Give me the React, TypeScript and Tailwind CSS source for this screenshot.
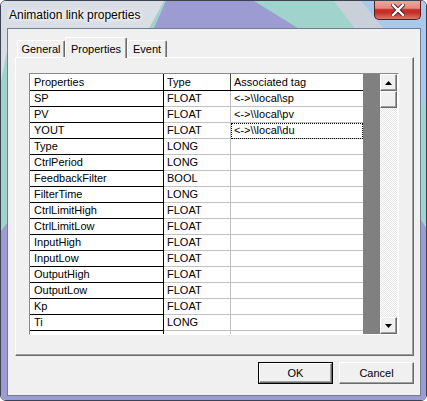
import React from "react";

type Row = [string, string, string];

const rows: Row[] = [
  ["SP", "FLOAT", "<->\\\\local\\sp"],
  ["PV", "FLOAT", "<->\\\\local\\pv"],
  ["YOUT", "FLOAT", "<->\\\\local\\du"],
  ["Type", "LONG", ""],
  ["CtrlPeriod", "LONG", ""],
  ["FeedbackFilter", "BOOL", ""],
  ["FilterTime", "LONG", ""],
  ["CtrlLimitHigh", "FLOAT", ""],
  ["CtrlLimitLow", "FLOAT", ""],
  ["InputHigh", "FLOAT", ""],
  ["InputLow", "FLOAT", ""],
  ["OutputHigh", "FLOAT", ""],
  ["OutputLow", "FLOAT", ""],
  ["Kp", "FLOAT", ""],
  ["Ti", "LONG", ""],
  ["", "", ""],
];

const raised =
  "bg-[#f0f0f0] border border-t-white border-l-white border-r-[#696969] border-b-[#696969] shadow-[inset_-1px_-1px_0_#a0a0a0]";

function AeroGlass() {
  return (
    <svg className="absolute inset-0" width="427" height="401" viewBox="0 0 427 401">
      <rect width="427" height="401" fill="#a9c8ee" />
      <polygon points="150,0 345,0 427,110 427,260 0,320 0,50" fill="#a1d3cd" />
      <polygon points="165,0 253,0 300,29 427,230 427,401 0,401 0,230 152,29" fill="#9c9bd2" />
      <polygon points="0,0 163,0 147,29 8,29 8,40 0,80" fill="#d9dde4" />
      <polygon points="333,0 360,0 384,29 355,29" fill="#c9d0da" />
    </svg>
  );
}

function Arrow({ down }: { down?: boolean }) {
  return (
    <svg width="7" height="4" viewBox="0 0 7 4">
      <polygon points={down ? "0,0 7,0 3.5,4" : "3.5,0 7,4 0,4"} fill="#000" />
    </svg>
  );
}

function Grid() {
  return (
    <div className="w-[370px] h-[262px] border border-t-[#8a8a8a] border-l-[#8a8a8a] border-r-white border-b-white flex bg-white text-[11px] text-black">
      <div className="w-[333px] h-[260px] overflow-hidden">
        {/* header */}
        <div className="flex h-[17px] border-b border-black">
          <div className="w-[134px] border-r border-black pl-[4px] leading-[16px]">Properties</div>
          <div className="w-[67px] border-r border-[#404040] pl-[3px] leading-[16px]">Type</div>
          <div className="w-[132px] pl-[3px] leading-[16px]">Associated tag</div>
        </div>
        {rows.map((r, i) => (
          <div key={i} className="flex h-[16px]">
            <div className="w-[134px] border-r border-b border-black pl-[4px] leading-[15px]">{r[0]}</div>
            <div className="w-[67px] border-r border-b border-[#c0c0c0] pl-[3px] leading-[15px]">{r[1]}</div>
            <div
              className={
                i === 2
                  ? "w-[132px] border-b border-[#c0c0c0] pl-[3px] leading-[15px] outline-1 outline-dotted outline-black -outline-offset-1"
                  : "w-[132px] border-b border-[#c0c0c0] pl-[3px] leading-[15px]"
              }
            >
              {r[2]}
            </div>
          </div>
        ))}
      </div>
      <div className="w-[17px] h-[260px] bg-[#808080]" />
      <div className="w-[17px] h-[260px] flex flex-col bg-[repeating-conic-gradient(#ffffff_0_25%,#e6e6e6_0_50%)] bg-[length:2px_2px]">
        <div className={`${raised} h-[17px] flex items-center justify-center`}>
          <Arrow />
        </div>
        <div className={`${raised} h-[17px]`} />
        <div className="flex-1" />
        <div className={`${raised} h-[17px] flex items-center justify-center`}>
          <Arrow down />
        </div>
      </div>
    </div>
  );
}

export default function App() {
  return (
    <div className="relative w-[427px] h-[401px] overflow-hidden rounded-[6px] border border-[#3b4250] font-['Liberation_Sans',Arial,sans-serif]">
      <AeroGlass />
      <div className="relative flex flex-col h-full pl-[6px] pr-[5px] pb-[4px]">
        {/* title bar */}
        <div className="h-[27px] flex items-center pl-[2px] pt-[1px] text-[12px] text-black [text-shadow:0_0_8px_#fff,0_0_5px_#fff,0_0_3px_#fff]">
          Animation link properties
        </div>
        <div className="absolute top-0 right-[5px] w-[47px] h-[19px] rounded-b-[5px] border border-t-0 border-[#5a1d1a] bg-[linear-gradient(#eba79f_0%,#e38a80_40%,#c9302a_48%,#c32c24_62%,#d9756b_100%)] flex items-center justify-center">
          <svg width="14" height="12" viewBox="0 0 14 12">
            <path d="M2 1 L12 11 M12 1 L2 11" stroke="#4a2020" strokeWidth="4.2" strokeLinecap="square" />
            <path d="M2 1 L12 11 M12 1 L2 11" stroke="#fff" strokeWidth="2.4" strokeLinecap="square" />
          </svg>
        </div>

        {/* client area */}
        <div className="flex-1 border border-[#6f7e91] bg-[#f0f0f0] pt-[8px] pl-[7px] pr-[6px] flex flex-col text-[11px] text-black">
          {/* tabs */}
          <div className="flex items-end h-[20px] pl-[2px]">
            <div className="w-[48px] h-[17px] rounded-t-[2px] border-t border-l border-white border-r border-r-[#696969] shadow-[inset_-1px_0_0_#a0a0a0] flex items-center justify-center">
              General
            </div>
            <div className="relative z-10 w-[62px] h-[21px] -mb-[1px] rounded-t-[2px] border-t border-l border-white border-r border-r-[#696969] shadow-[inset_-1px_0_0_#a0a0a0] bg-[#f0f0f0] flex items-start justify-center pt-[3px]">
              Properties
            </div>
            <div className="w-[40px] h-[17px] rounded-t-[2px] border-t border-l border-white border-r border-r-[#696969] shadow-[inset_-1px_0_0_#a0a0a0] flex items-center justify-center">
              Event
            </div>
          </div>
          {/* tab panel */}
          <div className="w-[399px] h-[299px] border border-t-white border-l-white border-r-[#696969] border-b-[#696969] shadow-[inset_-1px_-1px_0_#a0a0a0] pl-[13px] pt-[15px]">
            <Grid />
          </div>
          {/* buttons */}
          <div className="flex justify-end gap-[6px] mt-[6px]">
            <div className="w-[75px] h-[22px] border border-black">
              <div className={`${raised} h-full flex items-center justify-center`}>OK</div>
            </div>
            <div className={`${raised} w-[75px] h-[22px] flex items-center justify-center`}>Cancel</div>
          </div>
        </div>
      </div>
    </div>
  );
}
